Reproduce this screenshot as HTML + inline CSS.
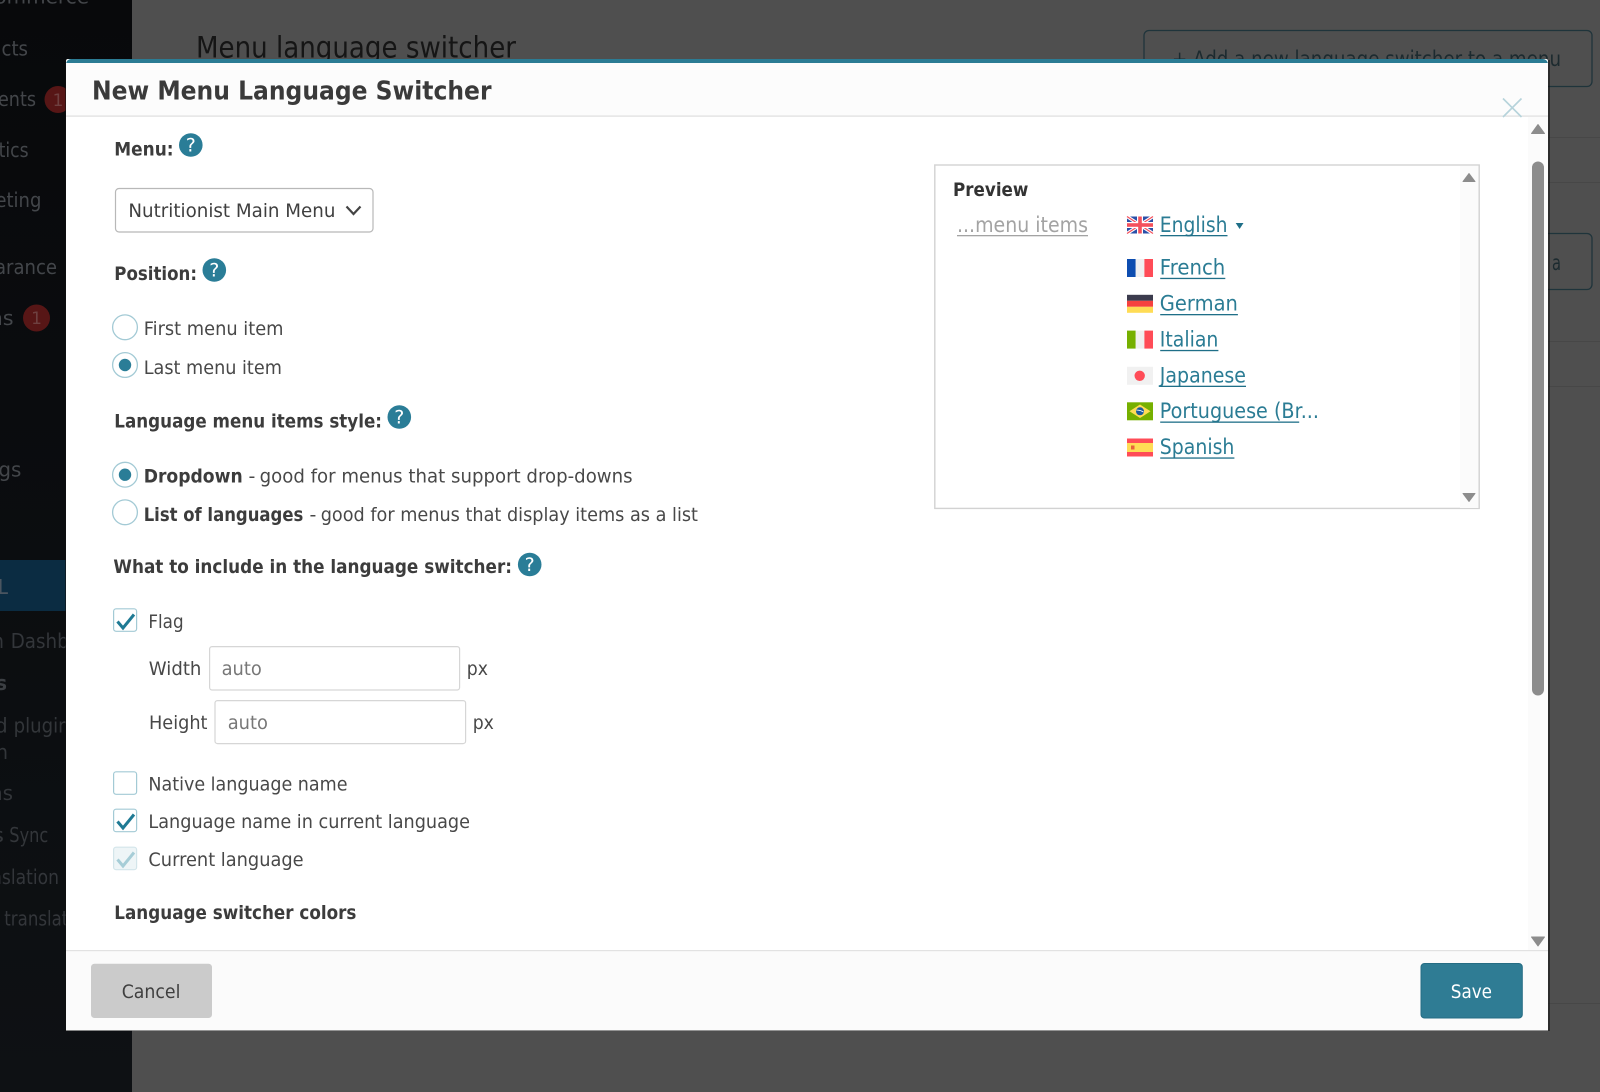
<!DOCTYPE html>
<html lang="en">
<head>
<meta charset="utf-8">
<title>New Menu Language Switcher</title>
<style>
html,body{margin:0;padding:0;width:1600px;height:1092px;overflow:hidden;background:#4f4f4f}
svg{display:block;position:absolute;left:0;top:0}
text{font-family:"DejaVu Sans","Liberation Sans",sans-serif;white-space:pre}
.r{font-size:19px;fill:#484848}
.b{font-size:18.6px;font-weight:bold;fill:#3c3c3c}
.l{font-size:21px;fill:#2b7c94}
.q{font-size:19px;fill:#fff;text-anchor:middle}
</style>
</head>
<body>
<svg width="1600" height="1092" viewBox="0 0 1600 1092" xmlns="http://www.w3.org/2000/svg">
<defs>
<linearGradient id="sb" x1="0" y1="0" x2="0" y2="1"><stop offset="0" stop-color="#08090b"/><stop offset="1" stop-color="#0e1114"/></linearGradient>
<clipPath id="mtop"><rect x="66" y="59" width="1482" height="10" rx="5"/></clipPath>
</defs>

<!-- page background -->
<rect width="1600" height="1092" fill="#4f4f4f"/>
<rect x="132" y="137" width="1468" height="1" fill="#474747"/>
<rect x="132" y="182" width="1468" height="1" fill="#474747"/>
<rect x="132" y="341" width="1468" height="1" fill="#474747"/>
<rect x="132" y="386" width="1468" height="1" fill="#474747"/>
<rect x="132" y="1003" width="1468" height="1" fill="#474747"/>
<text x="196" y="57.6" font-size="29" fill="#151515" textLength="320" lengthAdjust="spacingAndGlyphs">Menu language switcher</text>
<rect x="1144" y="30.5" width="448" height="56" rx="5" fill="none" stroke="#1f343b" stroke-width="1.3"/>
<text x="1172" y="66" font-size="21" fill="#1c2a2f" textLength="389" lengthAdjust="spacingAndGlyphs">+ Add a new language switcher to a menu</text>
<rect x="1530" y="233.5" width="62" height="56" rx="5" fill="none" stroke="#1f343b" stroke-width="1.3"/>
<text x="1552" y="270" font-size="21" fill="#1c2a2f" textLength="9" lengthAdjust="spacingAndGlyphs">a</text>

<!-- sidebar -->
<rect width="132" height="1092" fill="url(#sb)"/>
<rect y="560" width="66" height="51" fill="#0b2c42"/>
<g font-size="20" fill="#43464a" text-anchor="end">
<text x="89" y="3.5">commerce</text>
<text x="28" y="55.5" textLength="38" lengthAdjust="spacingAndGlyphs">ucts</text>
<text x="36" y="106" textLength="38" lengthAdjust="spacingAndGlyphs">ents</text>
<text x="28.6" y="157" textLength="30" lengthAdjust="spacingAndGlyphs">tics</text>
<text x="41.4" y="207" textLength="46" lengthAdjust="spacingAndGlyphs">eting</text>
<text x="57" y="274" textLength="62" lengthAdjust="spacingAndGlyphs">arance</text>
<text x="13.6" y="325" textLength="24" lengthAdjust="spacingAndGlyphs">ns</text>
<text x="21.4" y="476.5" textLength="23" lengthAdjust="spacingAndGlyphs">gs</text>
</g>
<g font-size="20" fill="#33363a">
<text x="-2" y="594" fill="#4a5560" textLength="10" lengthAdjust="spacingAndGlyphs">L</text>
<text x="10.7" y="648" textLength="58" lengthAdjust="spacingAndGlyphs">Dashb</text>
<text x="-8" y="648" textLength="12" lengthAdjust="spacingAndGlyphs">n</text>
<text x="-4" y="690" font-weight="bold" fill="#3c3f43" textLength="11" lengthAdjust="spacingAndGlyphs">s</text>
<text x="-5" y="732.7" textLength="13">d</text>
<text x="13.6" y="732.7" textLength="56" lengthAdjust="spacingAndGlyphs">plugin</text>
<text x="-4" y="759" textLength="12" lengthAdjust="spacingAndGlyphs">n</text>
<text x="-10" y="800" textLength="23" lengthAdjust="spacingAndGlyphs">ns</text>
<text x="-8" y="842" textLength="12" lengthAdjust="spacingAndGlyphs">s</text>
<text x="9.3" y="842" textLength="39" lengthAdjust="spacingAndGlyphs">Sync</text>
<text x="-9" y="884" textLength="68" lengthAdjust="spacingAndGlyphs">nslation</text>
<text x="4.3" y="925.7" textLength="64" lengthAdjust="spacingAndGlyphs">translat</text>
</g>
<circle cx="58" cy="99.5" r="13.5" fill="#571616"/>
<text x="58" y="106" font-size="17" fill="#6e4040" text-anchor="middle">1</text>
<circle cx="36.5" cy="318" r="13.5" fill="#571616"/>
<text x="36.5" y="324" font-size="17" fill="#6e4040" text-anchor="middle">1</text>

<!-- modal -->
<rect x="65" y="60" width="1485" height="971" fill="#111" opacity=".55"/>
<rect x="66" y="59" width="1482" height="971.5" rx="2" fill="#fff"/>
<rect x="66" y="59" width="1482" height="4" fill="#2b7c94" clip-path="url(#mtop)"/>
<rect x="66" y="63" width="1482" height="53" fill="#fcfcfc"/>
<rect x="66" y="115.5" width="1482" height="1.2" fill="#dedede"/>
<text x="92" y="99.6" font-size="26" font-weight="bold" fill="#3a3a3a" textLength="399.5" lengthAdjust="spacingAndGlyphs">New Menu Language Switcher</text>
<path d="M1503 98.5L1521.5 117M1521.5 98.5L1503 117" stroke="#b6d3db" stroke-width="1.6" fill="none"/>

<!-- modal scrollbar -->
<rect x="1528" y="117" width="20" height="833" fill="#fbfbfb"/>
<path d="M1538 124.5L1544.5 133.5H1531.5Z" fill="#8c8c8c" stroke="#8c8c8c" stroke-linejoin="round"/>
<rect x="1532" y="161.5" width="12" height="534" rx="6" fill="#8c8c8c"/>
<path d="M1538 946L1544.5 937H1531.5Z" fill="#8c8c8c" stroke="#8c8c8c" stroke-linejoin="round"/>

<!-- Menu -->
<text class="b" x="114.3" y="155.5" textLength="59.3" lengthAdjust="spacingAndGlyphs">Menu:</text>
<circle cx="190.8" cy="145" r="11.8" fill="#2a7d97"/><text class="q" x="190.8" y="151.5">?</text>
<rect x="115.5" y="188.5" width="257.5" height="43.5" rx="3.5" fill="#fff" stroke="#b8b8b8" stroke-width="1.2"/>
<text class="r" x="128.4" y="216.8" textLength="207" lengthAdjust="spacingAndGlyphs" style="fill:#3f3f3f">Nutritionist Main Menu</text>
<path d="M346.5 206.5L353.5 214L360.5 206.5" fill="none" stroke="#444" stroke-width="2.2"/>

<!-- Position -->
<text class="b" x="114.3" y="279.8" textLength="82.7" lengthAdjust="spacingAndGlyphs">Position:</text>
<circle cx="214.3" cy="270" r="11.8" fill="#2a7d97"/><text class="q" x="214.3" y="276.5">?</text>
<circle cx="125" cy="327.3" r="12.4" fill="#fff" stroke="#a3cad5" stroke-width="1.3"/>
<text class="r" x="143.7" y="334.8" textLength="139.8" lengthAdjust="spacingAndGlyphs">First menu item</text>
<circle cx="125" cy="365" r="12.4" fill="#fff" stroke="#a3cad5" stroke-width="1.3"/>
<circle cx="125" cy="365" r="6.2" fill="#2a7d97"/>
<text class="r" x="143.7" y="373.9" textLength="138.2" lengthAdjust="spacingAndGlyphs">Last menu item</text>

<!-- Style -->
<text class="b" x="114.3" y="427.7" textLength="267.7" lengthAdjust="spacingAndGlyphs">Language menu items style:</text>
<circle cx="399.3" cy="417" r="11.8" fill="#2a7d97"/><text class="q" x="399.3" y="423.5">?</text>
<circle cx="125" cy="474.7" r="12.4" fill="#fff" stroke="#a3cad5" stroke-width="1.3"/>
<circle cx="125" cy="474.7" r="6.2" fill="#2a7d97"/>
<text class="b" x="143.7" y="482.4" textLength="99" lengthAdjust="spacingAndGlyphs">Dropdown</text>
<text class="r" x="248.5" y="482.3">-</text>
<text class="r" x="259.6" y="482.3" textLength="373" lengthAdjust="spacingAndGlyphs">good for menus that support drop-downs</text>
<circle cx="125" cy="512.3" r="12.4" fill="#fff" stroke="#a3cad5" stroke-width="1.3"/>
<text class="b" x="143.7" y="521" textLength="159.6" lengthAdjust="spacingAndGlyphs">List of languages</text>
<text class="r" x="309.5" y="520.9">-</text>
<text class="r" x="320.7" y="520.9" textLength="377.3" lengthAdjust="spacingAndGlyphs">good for menus that display items as a list</text>

<!-- Include -->
<text class="b" x="113.4" y="572.9" textLength="398.6" lengthAdjust="spacingAndGlyphs">What to include in the language switcher:</text>
<circle cx="529.7" cy="564.5" r="11.8" fill="#2a7d97"/><text class="q" x="529.7" y="571">?</text>

<rect x="113.6" y="608.8" width="23" height="22.5" rx="2.5" fill="#fff" stroke="#a3cad5" stroke-width="1.2"/>
<path d="M117.5 621.5L123 628L134 614.5" fill="none" stroke="#1f7a94" stroke-width="3"/>
<text class="r" x="148.4" y="628.2" textLength="35.2" lengthAdjust="spacingAndGlyphs">Flag</text>

<text class="r" x="148.8" y="675.2" textLength="52.6" lengthAdjust="spacingAndGlyphs">Width</text>
<rect x="209.6" y="646.6" width="250" height="43.4" rx="2.5" fill="#fff" stroke="#d6d6d6" stroke-width="1.2"/>
<text class="r" x="221.6" y="675.2" textLength="40.2" lengthAdjust="spacingAndGlyphs" style="fill:#777">auto</text>
<text class="r" x="466.8" y="675.2" textLength="21.2" lengthAdjust="spacingAndGlyphs">px</text>

<text class="r" x="149" y="728.8" textLength="58.5" lengthAdjust="spacingAndGlyphs">Height</text>
<rect x="215" y="700.6" width="250.6" height="43" rx="2.5" fill="#fff" stroke="#d6d6d6" stroke-width="1.2"/>
<text class="r" x="227.7" y="728.8" textLength="40.2" lengthAdjust="spacingAndGlyphs" style="fill:#777">auto</text>
<text class="r" x="472.7" y="728.8" textLength="21.2" lengthAdjust="spacingAndGlyphs">px</text>

<rect x="113.6" y="771.8" width="23" height="22.5" rx="2.5" fill="#fff" stroke="#a3cad5" stroke-width="1.2"/>
<text class="r" x="148.4" y="790.5" textLength="199.1" lengthAdjust="spacingAndGlyphs">Native language name</text>
<rect x="113.6" y="809.2" width="23" height="22.5" rx="2.5" fill="#fff" stroke="#a3cad5" stroke-width="1.2"/>
<path d="M117.5 821.5L123 828L134 814.5" fill="none" stroke="#1f7a94" stroke-width="3"/>
<text class="r" x="148.4" y="827.8" textLength="321.6" lengthAdjust="spacingAndGlyphs">Language name in current language</text>
<rect x="113.6" y="847.2" width="23" height="22.5" rx="2.5" fill="#eef5f7" stroke="#d3e5ea" stroke-width="1.2"/>
<path d="M117.5 859.5L123 866L134 852.5" fill="none" stroke="#a6cdd7" stroke-width="3"/>
<text class="r" x="148.4" y="865.9" textLength="155.2" lengthAdjust="spacingAndGlyphs">Current language</text>
<text class="b" x="114.3" y="918.9" textLength="242.1" lengthAdjust="spacingAndGlyphs">Language switcher colors</text>

<!-- Preview box -->
<rect x="934.8" y="165" width="544.4" height="343.4" fill="#fff" stroke="#d2d2d2" stroke-width="1.4"/>
<rect x="1460" y="166" width="18.5" height="342" fill="#fbfbfb"/>
<path d="M1469 173.5L1475 181.5H1463Z" fill="#8c8c8c" stroke="#8c8c8c" stroke-linejoin="round"/>
<path d="M1469 501.5L1475 493.5H1463Z" fill="#8c8c8c" stroke="#8c8c8c" stroke-linejoin="round"/>
<text class="b" x="953" y="196" textLength="75.4" lengthAdjust="spacingAndGlyphs" style="fill:#333">Preview</text>

<text x="957" y="232.2" font-size="21" fill="#a3a3a3" textLength="131" lengthAdjust="spacingAndGlyphs">...menu items</text>
<rect x="957" y="235" width="131" height="1.3" fill="#a3a3a3"/>

<!-- English -->
<rect x="1127" y="216.5" width="26" height="17" fill="#2a4fa8"/>
<path d="M1127 216.5L1153 233.5M1153 216.5L1127 233.5" stroke="#fff" stroke-width="3.4"/>
<path d="M1127 216.5L1153 233.5M1153 216.5L1127 233.5" stroke="#f4505c" stroke-width="1.2"/>
<rect x="1137" y="216.5" width="6" height="17" fill="#fff"/><rect x="1127" y="222" width="26" height="6" fill="#fff"/>
<rect x="1138.2" y="216.5" width="3.6" height="17" fill="#f4505c"/><rect x="1127" y="223.2" width="26" height="3.6" fill="#f4505c"/>
<text class="l" x="1159.8" y="232.2" textLength="67.7" lengthAdjust="spacingAndGlyphs">English</text>
<rect x="1160.2" y="235" width="67.3" height="1.3" fill="#1f6f88"/>
<path d="M1235.7 223H1243.5L1239.6 229Z" fill="#1f6f88"/>

<!-- French -->
<rect x="1127" y="259" width="8.7" height="18" fill="#0d4db0"/><rect x="1135.7" y="259" width="8.7" height="18" fill="#f0f0f0"/><rect x="1144.4" y="259" width="8.6" height="18" fill="#ff4c57"/>
<text class="l" x="1159.8" y="274.3" textLength="65.5" lengthAdjust="spacingAndGlyphs">French</text>
<rect x="1160.2" y="277.8" width="65.1" height="1.3" fill="#1f6f88"/>

<!-- German -->
<rect x="1127" y="294.8" width="26" height="6" fill="#3b3b4d"/><rect x="1127" y="300.8" width="26" height="6" fill="#f6423f"/><rect x="1127" y="306.8" width="26" height="6" fill="#ffdc55"/>
<text class="l" x="1159.8" y="310.5" textLength="78.1" lengthAdjust="spacingAndGlyphs">German</text>
<rect x="1160.2" y="314" width="77.7" height="1.3" fill="#1f6f88"/>

<!-- Italian -->
<rect x="1127" y="330.6" width="8.7" height="18" fill="#76b000"/><rect x="1135.7" y="330.6" width="8.7" height="18" fill="#f0f0f0"/><rect x="1144.4" y="330.6" width="8.6" height="18" fill="#ff4c57"/>
<text class="l" x="1159.8" y="346.4" textLength="58.6" lengthAdjust="spacingAndGlyphs">Italian</text>
<rect x="1160.2" y="349.9" width="58.2" height="1.3" fill="#1f6f88"/>

<!-- Japanese -->
<rect x="1127" y="366.8" width="26" height="18" fill="#f1f1f1"/><circle cx="1139.7" cy="375.8" r="5.2" fill="#ff4c57"/>
<text class="l" x="1159.8" y="382.3" textLength="86.2" lengthAdjust="spacingAndGlyphs">Japanese</text>
<rect x="1160.2" y="385.7" width="85.8" height="1.3" fill="#1f6f88"/>

<!-- Portuguese -->
<rect x="1127" y="402.3" width="26" height="18" fill="#76b000"/>
<path d="M1129.5 411.3L1140 404.5L1150.5 411.3L1140 418Z" fill="#ffdc55"/><circle cx="1140" cy="411.3" r="4" fill="#1c5a9e"/><path d="M1136.5 410.2Q1140 409.8 1143.5 412" stroke="#fff" stroke-width=".8" fill="none"/>
<text class="l" x="1159.8" y="418" textLength="159.2" lengthAdjust="spacingAndGlyphs">Portuguese (Br...</text>
<rect x="1160.2" y="421.5" width="139" height="1.3" fill="#1f6f88"/>

<!-- Spanish -->
<rect x="1127" y="438.5" width="26" height="18" fill="#ff4c57"/><rect x="1127" y="443" width="26" height="9" fill="#ffdc55"/><rect x="1131" y="445.5" width="3.5" height="4" fill="#e8623a"/>
<text class="l" x="1159.8" y="454" textLength="74.6" lengthAdjust="spacingAndGlyphs">Spanish</text>
<rect x="1160.2" y="457.4" width="74.2" height="1.3" fill="#1f6f88"/>

<!-- Footer -->
<rect x="66" y="950" width="1482" height="80.5" fill="#fbfbfb"/>
<rect x="66" y="950" width="1482" height="1.2" fill="#e2e2e2"/>
<rect x="91" y="963.7" width="121" height="54.3" rx="3.5" fill="#cbcbcb"/>
<text x="121.7" y="998.2" font-size="19" fill="#3f3f3f" textLength="58.7" lengthAdjust="spacingAndGlyphs">Cancel</text>
<rect x="1421" y="963.5" width="101.3" height="54.5" rx="3.5" fill="#2f7c94" stroke="#266d84"/>
<text x="1450.8" y="998" font-size="19" fill="#fff" textLength="41.2" lengthAdjust="spacingAndGlyphs">Save</text>
</svg>
</body>
</html>
